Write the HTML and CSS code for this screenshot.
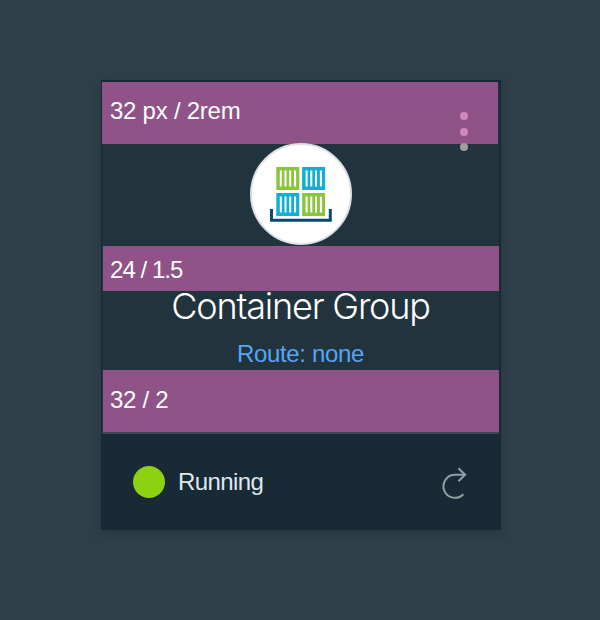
FILE: index.html
```html
<!DOCTYPE html>
<html lang="en">
<head>
<meta charset="utf-8">
<title>Container Group</title>
<link rel="stylesheet" href="styles.css">
</head>
<body>
<main class="card">
  <section class="card-body">
    <div class="spacer spacer-top"><span class="measure measure-top">32 px / 2rem</span></div>
    <div class="avatar">
      <svg width="62" height="56" viewBox="0 0 62 56">
        <defs>
          <g id="stripes" fill="#fff"><path d="M3.500 3.500h2v16h-2zM8.200 3.500h2v16h-2zM12.900 3.500h2v16h-2zM17.800 3.500h2v16h-2z"/></g>
        </defs>
        <path d="M6.300 0h23v23h-23zM32.100 26h23v23h-23z" fill="#8bc53f"/>
        <path d="M32.100 0h23v23h-23zM6.300 26h23v23h-23z" fill="#12afd3"/>
        <use href="#stripes" x="6.300"/><use href="#stripes" x="32.100"/>
        <use href="#stripes" x="6.300" y="26"/><use href="#stripes" x="32.100" y="26"/>
        <path d="M1.500 42v11.200h58.800V42" fill="none" stroke="#0b4a70" stroke-width="3"/>
      </svg>
    </div>
    <div class="spacer spacer-middle"><span class="measure measure-middle">24 / 1.5</span></div>
    <div class="details">
      <h1 class="title">Container Group</h1>
      <a class="route">Route: none</a>
    </div>
    <div class="spacer spacer-bottom"><span class="measure measure-bottom">32 / 2</span></div>
    <div class="menu"><i class="dot"></i><i class="dot"></i><i class="dot dot-muted"></i></div>
  </section>
  <footer class="footer">
    <span class="status-dot"></span>
    <span class="status">Running</span>
    <svg class="refresh" width="28" height="34" viewBox="0 0 28 34" fill="none" stroke="#92a0a3" stroke-width="2">
      <path d="M24.500 9.800H14.500A11.500 11.500 0 1 0 23.300 29.200M18.400 3.300 25.200 9.800 18.400 16.300"/>
    </svg>
  </footer>
</main>
</body>
</html>
```

FILE: styles.css
```css
* { box-sizing: border-box; }

body {
  margin: 0;
  padding: 80px 99px 0 101px;
  height: 620px;
  background: #2e3f49;
  font-family: "Liberation Sans", Arial, sans-serif;
  color: #fff;
}

.card {
  height: 450px;
  border: solid #172a35;
  border-width: 2px 2px 0 1px;
  background: #172a35;
  box-shadow: 0 4px 8px rgba(20, 30, 35, .22);
}

.card-body {
  position: relative;
  height: 352px;
  background: #21343d;
  border-bottom: 2px solid #364852;
}

.spacer {
  display: flex;
  align-items: center;
  margin-left: 1px;
  padding-left: 7px;
  background: #8f5388;
}

.spacer-top {
  height: 62px;
  margin: 0 1px 0 0;
  padding-left: 8px;
  padding-bottom: 4px;
}

.spacer-middle { height: 45px; padding-top: 2px; }
.spacer-bottom { height: 62px; padding-bottom: 2px; }

.measure { font-size: 24px; line-height: 28px; }
.measure-top { letter-spacing: -.25px; }
.measure-middle { letter-spacing: -.95px; }
.measure-bottom { letter-spacing: -.3px; }

.avatar {
  position: relative;
  display: flex;
  justify-content: center;
  width: 102px;
  height: 102px;
  margin: -1px auto 1px 148px;
  padding-top: 22px;
  border: 2px solid #dce0e5;
  border-radius: 50%;
  background: #fff;
}

.details {
  display: flex;
  flex-direction: column;
  align-items: center;
  height: 79px;
}

.title {
  margin: -7px 0 0;
  font-family: Inter, "Liberation Sans", sans-serif;
  font-size: 36px;
  font-weight: 300;
  line-height: 44px;
  letter-spacing: -1.2px;
  white-space: nowrap;
}

.route {
  margin-top: 12px;
  font-size: 24px;
  line-height: 28px;
  letter-spacing: -.35px;
  color: #56a5f8;
}

.menu {
  position: absolute;
  top: 30px;
  left: 358px;
  display: grid;
  gap: 7.500px;
}

.dot {
  width: 8px;
  height: 8px;
  border-radius: 50%;
  background: #d189be;
}

.dot-muted { background: #9d9f9d; }

.footer {
  display: flex;
  align-items: center;
  height: 96px;
  padding: 0 31px;
}

.status-dot {
  width: 32px;
  height: 32px;
  border-radius: 50%;
  background: #8cd211;
}

.status {
  margin-left: 13px;
  font-size: 24px;
  letter-spacing: -.6px;
  color: #dfe7ed;
}

.refresh { margin-left: auto; }
```
